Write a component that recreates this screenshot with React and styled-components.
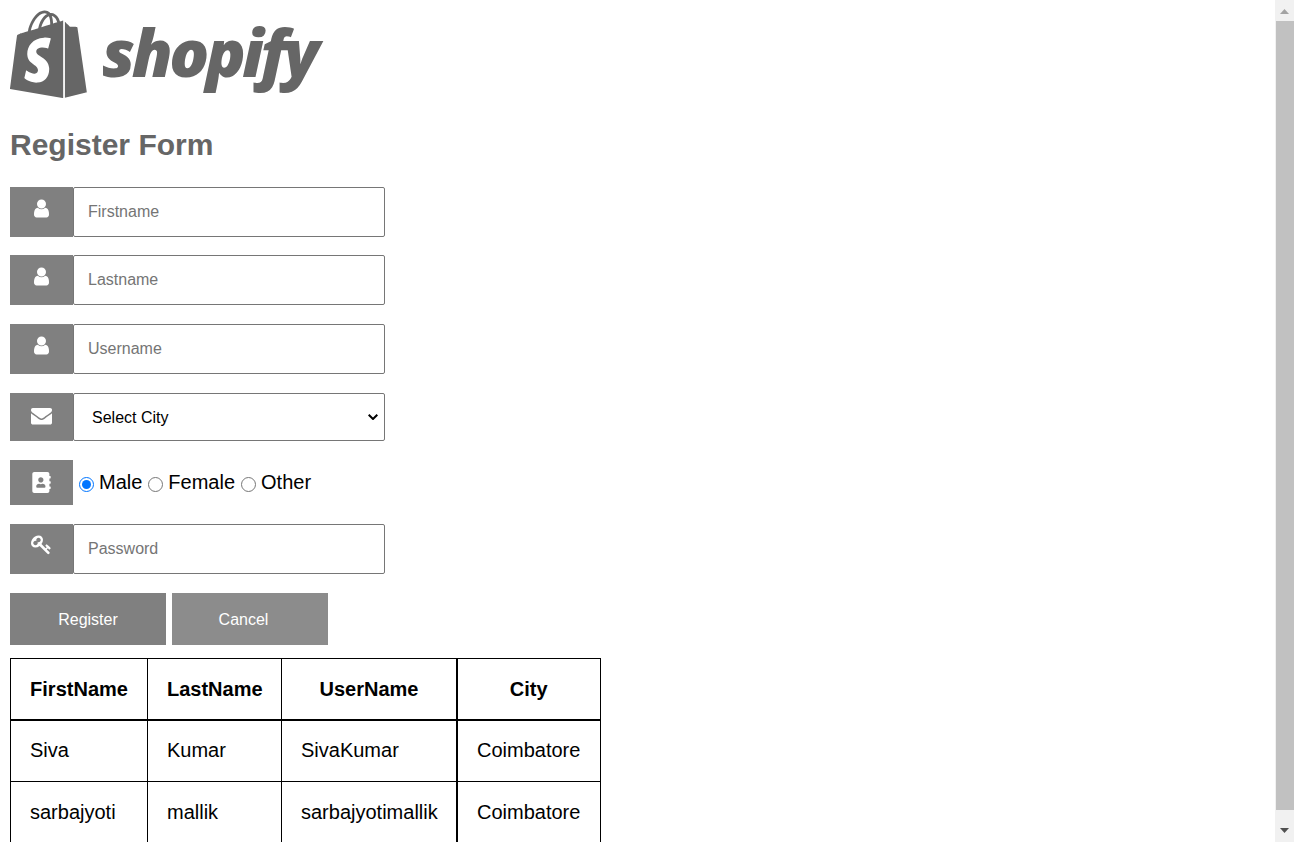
import React from 'react';
import styled, { createGlobalStyle } from 'styled-components';
import { FaAddressBook } from 'react-icons/fa';

const GlobalStyle = createGlobalStyle`
  html, body {
    height: 100%;
    overflow: hidden;
  }
  body {
    margin: 0;
    background: #fff;
    font-family: "Liberation Sans", Arial, sans-serif;
  }
`;

const Shell = styled.div`
  display: flex;
  height: 100vh;
`;

const Page = styled.main`
  flex: 1;
  min-width: 0;
  overflow: hidden;
  padding: 10px 0 0 10px;
`;

const ScrollRail = styled.aside`
  display: flex;
  flex-direction: column;
  align-items: stretch;
  flex: none;
  width: 19px;
  margin-right: 1px;
  background: #f1f1f1;
`;

const RailButton = styled.div`
  display: flex;
  justify-content: center;
  align-items: ${(p) => (p.$down ? 'flex-start' : 'flex-end')};
  flex: none;
  box-sizing: border-box;
  height: ${(p) => (p.$down ? 32 : 21)}px;
  padding: ${(p) => (p.$down ? '18px 0 0' : '0 0 7px')};

  svg {
    display: block;
    width: 9px;
    height: 5px;
    fill: ${(p) => (p.$down ? '#505050' : '#a3a3a3')};
  }
`;

const RailThumb = styled.div`
  flex: 1;
  margin-left: 1px;
  background: #c1c1c1;
`;

const Logo = styled.div`
  display: flex;
  align-items: flex-start;
  height: 88px;
  color: #666;
`;

const Bag = styled.svg`
  width: 77px;
  height: 88px;
  flex: none;
  fill: #666;
`;

const Wordmark = styled.span`
  margin-left: 15px;
  font-family: "Open Sans", sans-serif;
  font-size: 66px;
  font-style: italic;
  font-weight: 800;
  letter-spacing: -3.5px;
  line-height: 83px;
`;

const Title = styled.h2`
  margin: 30px 0 24.6px;
  color: #666;
  font-size: 30px;
  font-weight: 700;
  line-height: 34px;
`;

const Form = styled.form`
  display: flex;
  flex-direction: column;
  gap: 18.8px;
  width: 375px;
`;

const Row = styled.div`
  display: flex;
  height: ${(p) => p.$height || 50}px;
`;

const IconBox = styled.span`
  display: flex;
  justify-content: center;
  align-items: flex-start;
  flex: none;
  box-sizing: border-box;
  width: 63px;
  padding-top: ${(p) => p.$top}px;
  background: #808080;
  color: #fff;

  svg {
    display: block;
    width: 21px;
    height: 21px;
    fill: currentColor;
  }
`;

const TextInput = styled.input`
  flex: 1;
  box-sizing: border-box;
  min-width: 0;
  padding: 0 14px;
  border: 1px solid #767676;
  border-radius: 2px;
  background: #fff;
  font: 16px "Liberation Sans", Arial, sans-serif;
  outline: none;

  &::placeholder {
    color: #757575;
    opacity: 1;
  }
`;

const SelectWrap = styled.div`
  position: relative;
  display: flex;
  flex: 1;
  min-width: 0;

  svg {
    position: absolute;
    top: 21px;
    right: 7px;
    width: 10px;
    height: 6px;
    fill: none;
    stroke: #000;
    stroke-width: 2;
    pointer-events: none;
  }
`;

const CitySelect = styled.select`
  flex: 1;
  box-sizing: border-box;
  min-width: 0;
  padding: 1px 24px 0 18px;
  border: 1px solid #767676;
  border-radius: 2px;
  appearance: none;
  background: #fff;
  color: #000;
  font: 16px "Liberation Sans", Arial, sans-serif;
`;

const GenderGroup = styled.div`
  display: flex;
  align-items: center;
  gap: 6px;
  padding-left: 6px;
  color: #000;
  font-size: 20px;
`;

const GenderLabel = styled.label`
  display: flex;
  align-items: center;
  gap: 5px;
  height: 45px;

  input {
    width: 15px;
    height: 15px;
    margin: 4px 0 0;
  }
`;

const Actions = styled.div`
  display: flex;
  gap: 6px;
  margin-top: 0.5px;
`;

const ActionButton = styled.button`
  width: 156px;
  height: 52px;
  padding: 3px ${(p) => (p.$muted ? '13px' : '0')} 0 0;
  border: 0;
  background: ${(p) => (p.$muted ? '#8c8c8c' : '#808080')};
  color: #fff;
  font: 16px "Liberation Sans", Arial, sans-serif;
`;

const Table = styled.table`
  width: 589.5px;
  margin-top: 13px;
  border-collapse: collapse;
  table-layout: fixed;
  font-size: 20px;
  color: #000;
`;

const Head = styled.th`
  box-sizing: border-box;
  width: ${(p) => p.$width}px;
  padding: 19px 19px 18px;
  border: 1px solid #000;
  border-bottom-width: 2px;
  border-right-width: ${(p) => (p.$wide ? 2 : 1)}px;
  font-weight: 700;
`;

const Cell = styled.td`
  padding: ${(p) => (p.$low ? '19.5px 19px 18.5px' : '18.5px 19px')};
  border: 1px solid #000;
  border-right-width: ${(p) => (p.$wide ? 2 : 1)}px;
  white-space: nowrap;
`;

const USER_PATH =
  'M1536 1399q0 109-62.5 187t-150.5 78h-854q-88 0-150.5-78t-62.5-187q0-85 8.5-160.5t31.5-152 58.5-131 94-89 134.5-34.5q131 128 313 128t313-128q76 0 134.5 34.5t94 89 58.5 131 31.5 152 8.5 160.5zm-256-887q0 159-112.5 271.5t-271.5 112.5-271.5-112.5-112.5-271.5 112.5-271.5 271.5-112.5 271.5 112.5 112.5 271.5z';
const ENVELOPE_PATH =
  'M1792 710v794q0 66-47 113t-113 47h-1472q-66 0-113-47t-47-113v-794q44 49 101 87 362 246 497 345 57 42 92.5 65.5t94.5 48 110 24.5h2q51 0 110-24.5t94.5-48 92.5-65.5q170-123 498-345 57-39 100-87zm0-294q0 79-49 151t-122 123q-376 261-468 325-10 7-42.5 30.5t-54 38-52 32.5-57.5 27-50 9h-2q-23 0-50-9t-57.5-27-52-32.5-54-38-42.5-30.5q-91-64-262-182.5t-205-142.5q-62-42-117-115.5t-55-136.5q0-78 41.5-130t118.5-52h1472q65 0 112.5 44t47.5 112z';
const KEY_PATH =
  'M832 512q0-80-56-136t-136-56-136 56-56 136q0 42 19 83-41-19-83-19-80 0-136 56t-56 136 56 136 136 56 136-56 56-136q0-42-19-83 41 19 83 19 80 0 136-56t56-136zm851 704q0 17-49 66t-66 49q-9 0-28.5-16t-36.5-33-38.5-40-24.5-26l-96 96 220 220q28 28 28 68 0 42-39 81t-81 39q-40 0-68-28l-671-671q-176 131-365 131-163 0-265.5-102.5t-102.5-265.5q0-160 95-313t248-248 313-95q163 0 265.5 102.5t102.5 265.5q0 189-131 365l355 355 96-96q-3-3-26-24.5t-40-38.5-33-36.5-16-28.5q0-17 49-66t66-49q13 0 23 10 6 6 46 44.5t82 79.5 86.5 86 73 78 28.5 41z';

const Glyph = ({ d }) => (
  <svg viewBox="0 0 1792 1792">
    <path d={d} />
  </svg>
);

const rows = [
  { first: 'Siva', last: 'Kumar', user: 'SivaKumar', city: 'Coimbatore' },
  { first: 'sarbajyoti', last: 'mallik', user: 'sarbajyotimallik', city: 'Coimbatore', low: true },
];

export default function App() {
  return (
    <Shell>
      <GlobalStyle />
      <Page>
        <Logo>
          <Bag viewBox="0 0 109.5 124.5">
            <path d="M74.7,14.8c0,0-1.4,0.4-3.7,1.1c-0.4-1.3-1-2.8-1.8-4.4c-2.6-5-6.5-7.7-11.1-7.7c0,0,0,0,0,0c-0.3,0-0.6,0-1,0.1c-0.1-0.2-0.3-0.3-0.4-0.5c-2-2.2-4.6-3.2-7.7-3.1c-6,0.2-12,4.5-16.8,12.2c-3.4,5.4-6,12.2-6.7,17.5c-6.9,2.1-11.7,3.6-11.8,3.7c-3.5,1.1-3.6,1.2-4,4.5C9.3,40.3,0,111.9,0,111.9l75.6,13.1V14.7C75.2,14.7,74.9,14.8,74.7,14.8z M57.2,20.2c-4,1.2-8.4,2.6-12.7,3.9c1.2-4.7,3.6-9.4,6.4-12.5c1.1-1.1,2.6-2.4,4.3-3.2C56.9,12,57.3,16.9,57.2,20.2z M49.1,4.4c1.4,0,2.6,0.3,3.6,0.9c-1.6,0.8-3.2,2.1-4.7,3.6c-3.8,4.1-6.7,10.5-7.9,16.6c-3.6,1.1-7.2,2.2-10.5,3.2C31.7,19.1,39.8,4.6,49.1,4.4z M37.4,59.4c0.4,6.4,17.3,7.8,18.3,22.9c0.7,11.9-6.3,20-16.4,20.6c-12.2,0.8-18.9-6.4-18.9-6.4l2.6-11c0,0,6.7,5.1,12.1,4.7c3.5-0.2,4.8-3.1,4.7-5.1c-0.5-8.4-14.3-7.9-15.2-21.7C23.9,51.8,31.5,40.1,48.3,39c6.5-0.4,9.8,1.2,9.8,1.2l-3.8,14.4c0,0-4.3-2-9.4-1.6C37.4,53.5,37.3,58.2,37.4,59.4z M61.2,19c0-3-0.4-7.3-1.8-10.9c4.6,0.9,6.8,6,7.8,9.1C65.4,17.7,63.4,18.3,61.2,19z" />
            <path d="M78.1,124.4l31.4-7.8c0,0-13.5-91.3-13.6-91.9c-0.1-0.6-0.6-1-1.1-1c-0.5,0-9.3-0.2-9.3-0.2s-5.4-5.2-7.4-7.2V124.4z" />
          </Bag>
          <Wordmark>shopify</Wordmark>
        </Logo>
        <Title>Register Form</Title>
        <Form onSubmit={(e) => e.preventDefault()}>
          <Row>
            <IconBox $top={11}><Glyph d={USER_PATH} /></IconBox>
            <TextInput placeholder="Firstname" />
          </Row>
          <Row>
            <IconBox $top={11}><Glyph d={USER_PATH} /></IconBox>
            <TextInput placeholder="Lastname" />
          </Row>
          <Row>
            <IconBox $top={11}><Glyph d={USER_PATH} /></IconBox>
            <TextInput placeholder="Username" />
          </Row>
          <Row $height={48}>
            <IconBox $top={12}><Glyph d={ENVELOPE_PATH} /></IconBox>
            <SelectWrap>
              <CitySelect defaultValue="">
                <option value="">Select City</option>
                <option value="coimbatore">Coimbatore</option>
              </CitySelect>
              <svg viewBox="0 0 10 6"><path d="M0.7 0.7 5 5 9.3 0.7" /></svg>
            </SelectWrap>
          </Row>
          <Row $height={45}>
            <IconBox $top={12}><FaAddressBook /></IconBox>
            <GenderGroup>
              <GenderLabel><input type="radio" name="gender" defaultChecked />Male</GenderLabel>
              <GenderLabel><input type="radio" name="gender" />Female</GenderLabel>
              <GenderLabel><input type="radio" name="gender" />Other</GenderLabel>
            </GenderGroup>
          </Row>
          <Row>
            <IconBox $top={10}><Glyph d={KEY_PATH} /></IconBox>
            <TextInput type="password" placeholder="Password" />
          </Row>
          <Actions>
            <ActionButton>Register</ActionButton>
            <ActionButton type="button" $muted>Cancel</ActionButton>
          </Actions>
        </Form>
        <Table>
          <thead>
            <tr>
              <Head $width={137}>FirstName</Head>
              <Head $width={134}>LastName</Head>
              <Head $width={175.5} $wide>UserName</Head>
              <Head $width={143}>City</Head>
            </tr>
          </thead>
          <tbody>
            {rows.map((row) => (
              <tr key={row.user}>
                <Cell $low={row.low}>{row.first}</Cell>
                <Cell $low={row.low}>{row.last}</Cell>
                <Cell $low={row.low} $wide>{row.user}</Cell>
                <Cell $low={row.low}>{row.city}</Cell>
              </tr>
            ))}
          </tbody>
        </Table>
      </Page>
      <ScrollRail>
        <RailButton>
          <svg viewBox="0 0 9 5"><path d="M4.5 0 9 5H0z" /></svg>
        </RailButton>
        <RailThumb />
        <RailButton $down>
          <svg viewBox="0 0 9 5"><path d="M0 0h9L4.5 5z" /></svg>
        </RailButton>
      </ScrollRail>
    </Shell>
  );
}
